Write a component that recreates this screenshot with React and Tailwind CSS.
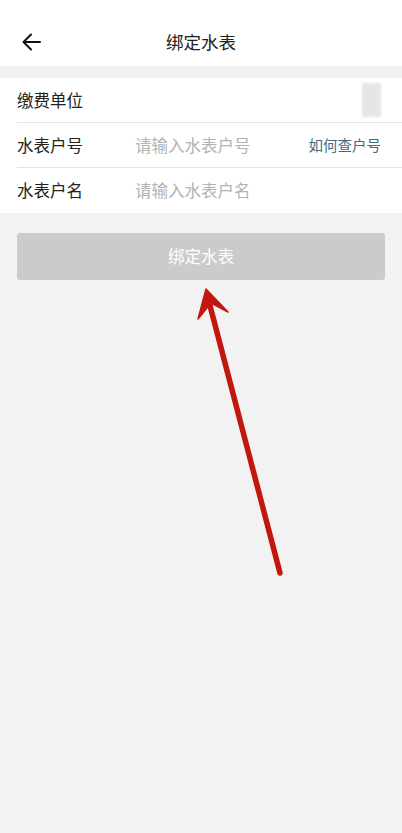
import React from "react";

const font = { fontFamily: '"Noto Sans CJK SC", "Noto Sans", sans-serif' };

function Row({ label, placeholder, right, last }) {
  return (
    <div className="pl-[17px]">
      <div
        className={
          "h-[45px] flex items-center pr-[21px] " +
          (last ? "" : "border-b border-[#e3e3e3]")
        }
      >
        <span className="w-[118px] text-[16.5px] text-[#222]">{label}</span>
        <span className="flex-1 text-[16.5px] text-[#b3b3b3]">{placeholder}</span>
        {right}
      </div>
    </div>
  );
}

export default function App() {
  return (
    <div className="w-[402px] h-[833px] bg-[#f2f2f2] overflow-hidden relative" style={font}>
      <header className="bg-white h-[66px] pt-[21px] relative">
        <div className="h-[42px] flex items-center justify-center relative">
          <button className="absolute left-[21px] top-[10px]">
            <svg width="22" height="22" viewBox="0 0 22 22" fill="none" stroke="#111" strokeWidth="2" strokeLinecap="round" strokeLinejoin="round">
              <path d="M19 11H3M10 3.5L2.5 11l7.5 7.5" />
            </svg>
          </button>
          <h1 className="text-[17.5px] text-[#222]">绑定水表</h1>
        </div>
      </header>

      <section className="mt-[12px] bg-white">
        <Row
          label="缴费单位"
          placeholder=""
          right={<div className="w-[19px] h-[34px] bg-[#e6e6e6] rounded-[2px] blur-[1px]" />}
        />
        <Row
          label="水表户号"
          placeholder="请输入水表户号"
          right={<span className="text-[14.5px] text-[#3f6a7e]">如何查户号</span>}
        />
        <Row label="水表户名" placeholder="请输入水表户名" last />
      </section>

      <div className="px-[17px] mt-[20px]">
        <button className="w-full h-[47px] rounded-[3px] bg-[#cbcbcb] text-white text-[16.5px]">
          绑定水表
        </button>
      </div>

      <svg className="absolute left-0 top-0 pointer-events-none" width="402" height="833" viewBox="0 0 402 833">
        <line x1="280" y1="573" x2="208" y2="298" stroke="#c2170f" strokeWidth="5.5" strokeLinecap="round" />
        <path d="M206 289 L228 312 L211 303 L198 319 Z" fill="#c2170f" stroke="#c2170f" strokeWidth="1.5" strokeLinejoin="round" />
      </svg>
    </div>
  );
}
